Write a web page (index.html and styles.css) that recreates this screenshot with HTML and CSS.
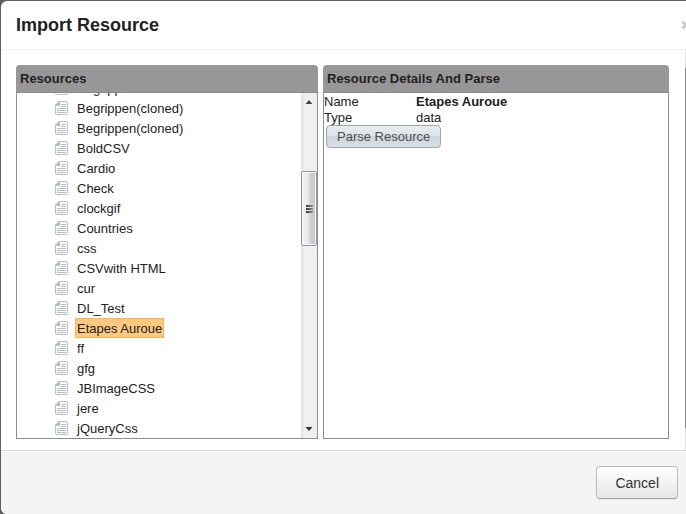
FILE: index.html
```
<!DOCTYPE html>
<html lang="en">
<head>
<meta charset="utf-8">
<title>Import Resource</title>
<link rel="stylesheet" href="styles.css">
</head>
<body>
<svg class="defs" width="0" height="0" aria-hidden="true">
  <symbol id="doc" viewBox="0 0 13 14">
    <path d="M4.5.5H11a1.5 1.5 0 0 1 1.5 1.5v10a1.5 1.5 0 0 1-1.5 1.500H2A1.5 1.5 0 0 1 .5 12V4.5z" fill="#fff" stroke="#b3bfc9"/>
    <path d="M4 0h1v5H0V4z" fill="#b3bfc9"/>
    <path d="M6 3.5h5M6 5.5h5M2 7.5h9M2 9.5h9M2 11.5h9" stroke="#b3bfc9" fill="none"/>
  </symbol>
</svg>
<div class="dialog" role="dialog" aria-labelledby="title">
  <header class="dialog-header">
    <h1 id="title">Import Resource</h1>
    <button class="close" type="button" aria-label="Close"><svg width="10" height="10" viewBox="0 0 10 10"><path d="M1.5 1.5l7 7M8.5 1.5l-7 7" stroke="#ccc" stroke-width="3"/></svg></button>
  </header>
  <div class="dialog-body">
    <main class="panels">
      <section class="panel">
        <h2>Resources</h2>
        <div class="panel-content browser">
          <ul class="tree">
            <li><svg class="icon"><use href="#doc"/></svg><span>Begrippen</span></li>
            <li><svg class="icon"><use href="#doc"/></svg><span>Begrippen(cloned)</span></li>
            <li><svg class="icon"><use href="#doc"/></svg><span>Begrippen(cloned)</span></li>
            <li><svg class="icon"><use href="#doc"/></svg><span>BoldCSV</span></li>
            <li><svg class="icon"><use href="#doc"/></svg><span>Cardio</span></li>
            <li><svg class="icon"><use href="#doc"/></svg><span>Check</span></li>
            <li><svg class="icon"><use href="#doc"/></svg><span>clockgif</span></li>
            <li><svg class="icon"><use href="#doc"/></svg><span>Countries</span></li>
            <li><svg class="icon"><use href="#doc"/></svg><span>css</span></li>
            <li><svg class="icon"><use href="#doc"/></svg><span>CSVwith HTML</span></li>
            <li><svg class="icon"><use href="#doc"/></svg><span>cur</span></li>
            <li><svg class="icon"><use href="#doc"/></svg><span>DL_Test</span></li>
            <li><svg class="icon"><use href="#doc"/></svg><span class="selected">Etapes Auroue</span></li>
            <li><svg class="icon"><use href="#doc"/></svg><span>ff</span></li>
            <li><svg class="icon"><use href="#doc"/></svg><span>gfg</span></li>
            <li><svg class="icon"><use href="#doc"/></svg><span>JBImageCSS</span></li>
            <li><svg class="icon"><use href="#doc"/></svg><span>jere</span></li>
            <li><svg class="icon"><use href="#doc"/></svg><span>jQueryCss</span></li>
          </ul>
          <div class="scrollbar" aria-hidden="true">
            <svg class="arrow" viewBox="0 0 16 17"><path d="M4.5 11L8 7l3.5 4z" fill="#444"/></svg>
            <div class="thumb"><i></i><i></i><i></i></div>
            <svg class="arrow arrow-down" viewBox="0 0 16 17"><path d="M4.5 6L8 10l3.500-4z" fill="#333"/></svg>
          </div>
        </div>
      </section>
      <section class="panel">
        <h2>Resource Details And Parse</h2>
        <div class="panel-content">
          <dl class="details">
            <dt>Name</dt><dd><strong>Etapes Auroue</strong></dd>
            <dt>Type</dt><dd>data</dd>
          </dl>
          <button class="parse" type="button">Parse Resource</button>
        </div>
      </section>
    </main>
    <div class="page-scroll" aria-hidden="true"><div class="page-thumb"></div></div>
  </div>
  <footer class="dialog-footer">
    <button class="cancel" type="button">Cancel</button>
  </footer>
</div>
</body>
</html>
```

FILE: styles.css
```
* { box-sizing: border-box; }

body {
  margin: 0;
  padding: 1px 0 0 1px;
  height: 100vh;
  overflow: hidden;
  background: #605e60;
  color: #222;
  font: 13px/16px "Liberation Sans", Arial, sans-serif;
}

h1, h2, ul, dl, dd { margin: 0; padding: 0; }

.defs { position: absolute; }

.dialog {
  display: flex;
  flex-direction: column;
  min-height: 100%;
  background: #fff;
  border-radius: 6px 0 0 6px;
  overflow: hidden;
}

.dialog-header {
  display: flex;
  align-items: center;
  justify-content: space-between;
  height: 49px;
  padding-left: 15px;
  border-bottom: 1px solid #eee;
}

h1 { font-size: 18px; line-height: 24px; }

.close {
  flex: none;
  margin-right: -5px;
  padding: 0;
  border: 0;
  background: none;
  line-height: 0;
}

.dialog-body {
  display: flex;
  flex: 1;
  border-bottom: 1px solid #ddd;
}

.panels {
  flex: 1;
  display: grid;
  grid-template-columns: 302fr 346fr;
  gap: 5px;
  padding: 15px 16px 11px 15px;
}

.page-scroll { width: 1px; padding: 18px 0 22px; background: #e4e4e4; }
.page-thumb { height: 100%; background: #888; }

.panel { display: flex; flex-direction: column; }

h2 {
  height: 28px;
  padding: 0 4px;
  background: #979797;
  border-bottom: 1px solid #8a8a8a;
  border-radius: 4px 4px 0 0;
  font-size: 13px;
  line-height: 27px;
}

.panel-content {
  flex: 1;
  border: 1px solid #8e8e8e;
  border-top: 0;
}

.browser { display: flex; overflow: hidden; }

.tree { flex: 1; margin-top: -15px; list-style: none; }
.tree li {
  display: flex;
  align-items: center;
  gap: 7px;
  height: 20px;
  padding-left: 38px;
}
.tree span { padding: 2px 1px 0; border: 1px solid transparent; }
.tree .selected { background: #fdc981; border-color: #fbb450; }
.icon { width: 13px; height: 14px; }

.scrollbar {
  display: flex;
  flex-direction: column;
  width: 16px;
  background: linear-gradient(90deg, #e3e3e3, #f0f0f0 25%, #eee);
}
.arrow { width: 16px; height: 17px; }
.arrow-down { margin-top: auto; }
.thumb {
  display: flex;
  flex-direction: column;
  align-items: center;
  justify-content: center;
  gap: 1px;
  height: 75px;
  margin-top: 61px;
  border: 1px solid #949494;
  border-radius: 2px;
  box-shadow: inset 0 0 0 1px #f8f8f8;
  background: linear-gradient(90deg, #f6f6f6, #e6e6e8 45%, #cfcfd4 60%, #c4c4ca);
  background-clip: padding-box;
}
.thumb i { width: 7px; height: 2px; background: linear-gradient(90deg, #333, #999); }

.details {
  display: grid;
  grid-template-columns: 92px 1fr;
  padding-top: 1px;
  margin-bottom: -1px;
}

.parse {
  display: block;
  height: 23px;
  margin: 0 2px;
  padding: 0 10px;
  border: 1px solid #98a9b6;
  border-radius: 4px;
  background: linear-gradient(#e8ecef, #dde2e6 50%, #cdd4d9 50%, #d9dee1);
  color: #4c4f53;
  font: 13px/21px "Liberation Sans", Arial, sans-serif;
}

.dialog-footer {
  display: flex;
  justify-content: flex-end;
  padding: 14px 8px 15px;
  border-top: 1px solid #fff;
  background: #f4f4f4;
}

.cancel {
  height: 33px;
  padding: 0 18px;
  border: 1px solid #bbb;
  border-bottom-color: #a2a2a2;
  border-radius: 4px;
  background: linear-gradient(#fff, #e6e6e6);
  box-shadow: 0 1px 2px rgba(0, 0, 0, .05);
  color: #333;
  font: 14px/20px "Liberation Sans", Arial, sans-serif;
}
```
